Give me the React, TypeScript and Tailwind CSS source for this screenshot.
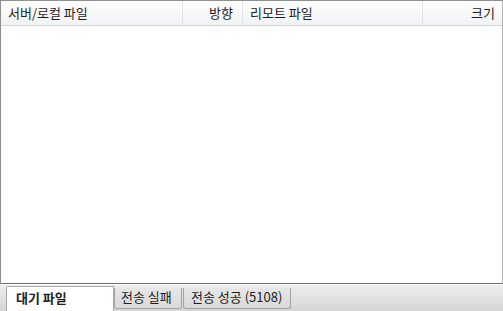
export default function App() {
  const font = { fontFamily: '"Noto Sans CJK KR", "Noto Sans", sans-serif' };
  return (
    <div className="w-[503px] h-[311px] flex flex-col bg-white text-[13px] text-[#1e1e1e] overflow-hidden" style={font}>
      <div className="h-[284px] shrink-0 flex flex-col border-t border-l border-r border-b border-t-[#8e8f8f] border-l-[#8e8f8f] border-r-[#b5b5b5] border-b-[#6f6f6f]">
        <div className="h-[25px] flex border-b border-[#d5d5d5] bg-gradient-to-b from-white to-[#f1f2f4] leading-[24px]">
          <div className="w-[182px] pl-[7px] border-r border-[#e3e4e6]">서버/로컬 파일</div>
          <div className="w-[60px] pr-[9px] text-right border-r border-[#e3e4e6]">방향</div>
          <div className="w-[180px] pl-[7px] border-r border-[#e3e4e6]">리모트 파일</div>
          <div className="flex-1 pr-[7px] text-right">크기</div>
        </div>
        <div className="flex-1 bg-white" />
      </div>
      <div className="h-px shrink-0 bg-white" />
      <div className="flex-1 min-h-0 overflow-hidden flex items-start pl-[6px] bg-gradient-to-b from-[#eeeeee] to-[#d5d5d5]">
        <div className="mt-[1px] shrink-0 w-[108px] h-[30px] bg-white border-l border-t border-r border-[#a9a9a9] rounded-tl-[2px] pl-[9px] leading-[21px] font-bold">
          대기 파일
        </div>
        <div className="mt-[3px] shrink-0 w-[68px] h-[21px] border-l border-r border-b border-[#a3a3a3] rounded-b-[3px] bg-gradient-to-b from-[#e7e7e7] to-[#d9d9d9] pl-[6px] leading-[18px]">
          전송 실패
        </div>
        <div className="mt-[3px] ml-[1px] shrink-0 w-[108px] h-[21px] border-l border-r border-b border-[#a3a3a3] rounded-b-[3px] bg-gradient-to-b from-[#e7e7e7] to-[#d9d9d9] pl-[7px] leading-[18px]">
          전송 성공 (5108)
        </div>
      </div>
    </div>
  );
}
